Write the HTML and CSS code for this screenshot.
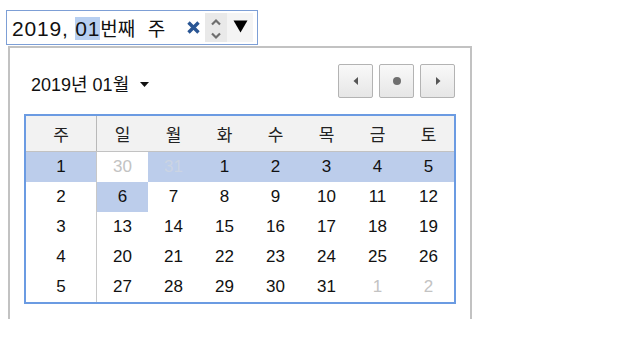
FILE: index.html
```html
<!DOCTYPE html>
<html lang="ko">
<head>
<meta charset="utf-8">
<link rel="stylesheet" href="styles.css">
</head>
<body>
<div class="field">
  <div class="value"><span>2019,</span> <span class="sel">01</span><span class="ko">번째</span> <span class="ko wk-word">주</span></div>
  <div class="controls">
    <svg class="clear" width="15" height="15" viewBox="0 0 15 15"><path d="M2.5 2.5 L12.5 12.5 M12.5 2.5 L2.5 12.5" stroke="#2a5694" stroke-width="3.4" stroke-linecap="butt"/></svg>
    <div class="spin">
      <svg width="12" height="26" viewBox="0 0 12 26"><path d="M2 9.5 L6 5.5 L10 9.5" fill="none" stroke="#6e6e6e" stroke-width="2.2"/><path d="M2 18.5 L6 22.5 L10 18.5" fill="none" stroke="#6e6e6e" stroke-width="2.2"/></svg>
    </div>
    <div class="drop">
      <svg width="15" height="13" viewBox="0 0 15 13"><path d="M0.5 0.5 H14.5 L7.5 12.5 Z" fill="#000"/></svg>
    </div>
  </div>
</div>
<div class="popup">
  <div class="head">
    <div class="title">2019년 01월 <svg class="caret" width="9" height="5" viewBox="0 0 9 5"><path d="M0 0 H9 L4.5 5 Z" fill="#111"/></svg></div>
    <div class="navs">
      <div class="btn"><svg width="6" height="8" viewBox="0 0 6 8"><path d="M5 0 V8 L0.5 4 Z" fill="#555"/></svg></div>
      <div class="btn"><span class="dot"></span></div>
      <div class="btn"><svg width="6" height="8" viewBox="0 0 6 8"><path d="M1 0 V8 L5.5 4 Z" fill="#555"/></svg></div>
    </div>
  </div>
  <table class="cal">
    <thead>
      <tr><th class="wk">주</th><th>일</th><th>월</th><th>화</th><th>수</th><th>목</th><th>금</th><th>토</th></tr>
    </thead>
    <tbody>
      <tr class="selrow"><td class="wk">1</td><td class="other white">30</td><td class="other faint">31</td><td>1</td><td>2</td><td>3</td><td>4</td><td>5</td></tr>
      <tr><td class="wk">2</td><td class="hl">6</td><td>7</td><td>8</td><td>9</td><td>10</td><td>11</td><td>12</td></tr>
      <tr><td class="wk">3</td><td>13</td><td>14</td><td>15</td><td>16</td><td>17</td><td>18</td><td>19</td></tr>
      <tr><td class="wk">4</td><td>20</td><td>21</td><td>22</td><td>23</td><td>24</td><td>25</td><td>26</td></tr>
      <tr><td class="wk">5</td><td>27</td><td>28</td><td>29</td><td>30</td><td>31</td><td class="other">1</td><td class="other">2</td></tr>
    </tbody>
  </table>
</div>
</body>
</html>
```
FILE: styles.css
```css
html, body {
  margin: 0;
  padding: 0;
  background: #fff;
}
body {
  font-family: "Liberation Sans", "Noto Sans CJK KR", sans-serif;
  color: #111;
  width: 640px;
  height: 338px;
  overflow: hidden;
}
.field {
  margin: 10px 0 0 6px;
  width: 250px;
  height: 33px;
  border: 1px solid #7d9fd6;
  display: flex;
  align-items: center;
  justify-content: space-between;
  box-sizing: content-box;
}
.value {
  padding-left: 5px;
  font-size: 21px;
  letter-spacing: 0.8px;
  color: #111;
  white-space: pre;
  line-height: 25px;
}
.value .ko {
  font-family: "Noto Sans CJK KR", sans-serif;
  font-size: 19px;
  letter-spacing: 0;
}
.value .wk-word {
  margin-left: 6px;
}
.value .sel {
  background: #b7cff1;
}
.controls {
  display: flex;
  align-items: center;
  height: 100%;
  padding-right: 4px;
}
.clear {
  display: block;
  margin-right: 4px;
}
.spin {
  width: 22px;
  height: 29px;
  background: #e9e9e9;
  display: flex;
  align-items: center;
  justify-content: center;
}
.spin svg { display: block; }
.drop {
  width: 26px;
  height: 29px;
  background: #f4f4f4;
  display: flex;
  align-items: center;
  justify-content: center;
}
.drop svg { display: block; margin-top: -2px; }
.popup {
  margin: 1px 0 0 8px;
  width: 432px;
  height: 271px;
  border: 2px solid #c2c2c2;
  border-bottom: none;
  padding: 0 14px;
  box-sizing: content-box;
}
.head {
  display: flex;
  justify-content: space-between;
  align-items: center;
  margin-top: 16px;
  height: 34px;
  padding-right: 1px;
}
.title {
  padding-left: 7px;
  font-size: 18px;
  color: #111;
  display: flex;
  align-items: center;
  gap: 11px;
  margin-top: 4px;
}
.title .caret { display: block; margin-top: 2px; }
.navs {
  display: flex;
  gap: 6px;
}
.btn {
  width: 33px;
  height: 32px;
  border: 1px solid #b3b3b3;
  border-radius: 2px;
  background: linear-gradient(#f9f9f9, #e6e6e6);
  display: flex;
  align-items: center;
  justify-content: center;
}
.btn svg { display: block; }
.dot {
  width: 8px;
  height: 8px;
  border-radius: 50%;
  background: #6f6f6f;
}
.cal {
  margin-top: 16px;
  border-collapse: collapse;
  border: 2px solid #6b9be2;
  width: 432px;
  table-layout: fixed;
  font-size: 16px;
}
.cal th, .cal td {
  padding: 0;
  text-align: center;
  width: 51px;
}
.cal th.wk, .cal td.wk {
  width: 70px;
  border-right: 1px solid #c8c8c8;
}
.cal th {
  height: 35px;
  background: #f2f2f2;
  border-bottom: 1px solid #c2c2c2;
  font-family: "Noto Sans CJK KR", sans-serif;
  font-weight: normal;
  font-size: 17px;
  color: #222;
}
.cal td {
  height: 30px;
  font-size: 17px;
  color: #111;
}
.cal th.wk { border-right: 1px solid #b9b9b9; }
.selrow td { background: #bccdeb; }
.selrow td.white { background: #fff; }
.cal td.other { color: #c3c3c3; }
.cal td.faint { color: #cbd4e3; }
.cal td.hl { background: #bccdeb; }
```
